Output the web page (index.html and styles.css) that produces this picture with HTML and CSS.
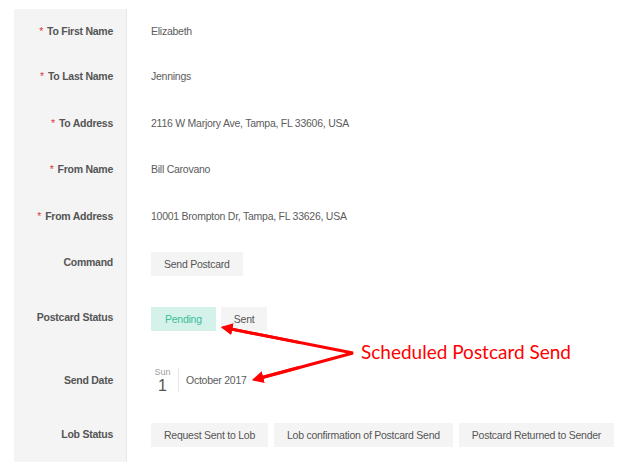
FILE: index.html
```html
<!DOCTYPE html>
<html lang="en">
<head>
<meta charset="utf-8">
<title>Postcard</title>
<link rel="stylesheet" href="styles.css">
</head>
<body>
<div class="page">
  <div class="form">
    <div class="label r1"><span class="req">*</span> To First Name</div>
    <div class="value r1">Elizabeth</div>

    <div class="label r2"><span class="req">*</span> To Last Name</div>
    <div class="value r2">Jennings</div>

    <div class="label r3"><span class="req">*</span> To Address</div>
    <div class="value r3">2116 W Marjory Ave, Tampa, FL 33606, USA</div>

    <div class="label r4"><span class="req">*</span> From Name</div>
    <div class="value r4">Bill Carovano</div>

    <div class="label r5"><span class="req">*</span> From Address</div>
    <div class="value r5">10001 Brompton Dr, Tampa, FL 33626, USA</div>

    <div class="label r6">Command</div>
    <div class="value r6 cmd"><span class="btn">Send Postcard</span></div>

    <div class="label r7">Postcard Status</div>
    <div class="value r7 status"><span class="btn active">Pending</span><span class="btn">Sent</span></div>

    <div class="label r8">Send Date</div>
    <div class="value r8">
      <div class="date">
        <div class="day"><span class="dow">Sun</span><span class="dnum">1</span></div>
        <div class="month">October 2017</div>
      </div>
    </div>

    <div class="label r9">Lob Status</div>
    <div class="value r9 lob"><span class="btn">Request Sent to Lob</span><span class="btn">Lob confirmation of Postcard Send</span><span class="btn">Postcard Returned to Sender</span></div>

    <div class="label filler"></div>
    <div class="value filler"></div>
  </div>

  <div class="annotation">
    <svg class="arrows" width="638" height="462" viewBox="0 0 638 462" xmlns="http://www.w3.org/2000/svg">
      <defs>
        <marker id="head" markerWidth="4" markerHeight="4" refX="3.2" refY="2" orient="auto" markerUnits="strokeWidth">
          <path d="M0,0 L4,2 L0,4 Z" fill="#f00"/>
        </marker>
      </defs>
      <polyline points="226,328 353,353 257,379" fill="none" stroke="#f00" stroke-width="3" stroke-linejoin="miter"/>
      <line x1="300" y1="342.6" x2="223" y2="327.4" stroke="#f00" stroke-width="3" marker-end="url(#head)"/>
      <line x1="300" y1="367.3" x2="254" y2="379.6" stroke="#f00" stroke-width="3" marker-end="url(#head)"/>
    </svg>
    <div class="note">Scheduled Postcard Send</div>
  </div>
</div>
</body>
</html>
```

FILE: styles.css
```css
html, body {
  margin: 0;
  padding: 0;
  background: #ffffff;
}

.page {
  position: relative;
  width: 638px;
  height: 462px;
  overflow: hidden;
  font-family: "Liberation Sans", Arial, sans-serif;
  font-size: 10.5px;
  letter-spacing: -0.25px;
  color: #555555;
}

.form {
  margin: 9px 0 0 14px;
  height: 453px;
  display: grid;
  grid-template-columns: 113px 1fr;
  grid-template-rows: 43px 47px 47px 46px 47px 48px 62px 62px 48px 1fr;
}

.label {
  background: #f4f4f4;
  border-right: 1px solid #e8e8e8;
  display: flex;
  align-items: center;
  justify-content: flex-end;
  padding-right: 13px;
  font-weight: bold;
  color: #555555;
  white-space: nowrap;
}

.req {
  color: #e0383e;
  font-weight: normal;
  margin-right: 4px;
}

.value {
  display: flex;
  align-items: center;
  padding-left: 24px;
  color: #5c5c5c;
  white-space: nowrap;
}

.r6.label { padding-bottom: 2px; }
.r6.value { padding-top: 2px; }
.r7.label { padding-bottom: 3px; }
.r7.value { padding-top: 1px; }
.r9.label { padding-bottom: 3px; }

.btn {
  display: inline-flex;
  align-items: center;
  height: 24px;
  padding: 0 13px;
  background: #f4f4f4;
  color: #555555;
}

.status .btn {
  margin-right: 5px;
}

.btn.active {
  background: #d4f2ea;
  color: #3bbd98;
  padding: 0 14px;
}

.lob .btn {
  margin-right: 6px;
}

.date {
  display: flex;
  align-items: center;
}

.day {
  width: 23px;
  display: flex;
  flex-direction: column;
  align-items: center;
  margin-right: 4px;
  letter-spacing: 0;
}

.dow {
  font-size: 9px;
  line-height: 10px;
  color: #a0a0a0;
}

.dnum {
  font-size: 16px;
  line-height: 17px;
  color: #555555;
}

.month {
  border-left: 1px solid #e6e6e6;
  height: 24px;
  display: flex;
  align-items: center;
  padding-left: 7px;
}

.annotation {
  position: absolute;
  left: 0;
  top: 0;
  width: 638px;
  height: 462px;
  pointer-events: none;
}

.arrows {
  position: absolute;
  left: 0;
  top: 0;
}

.note {
  position: absolute;
  left: 361px;
  top: 340px;
  font-family: Lato, "Open Sans", sans-serif;
  font-size: 19px;
  line-height: 24px;
  letter-spacing: 0;
  color: #ff0000;
  white-space: nowrap;
}
```
